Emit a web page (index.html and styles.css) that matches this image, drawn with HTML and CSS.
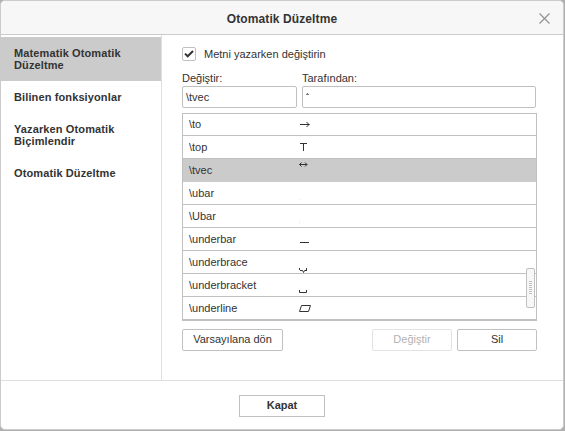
FILE: index.html
```html
<!DOCTYPE html>
<html lang="tr">
<head>
<meta charset="utf-8">
<title>Otomatik Düzeltme</title>
<link rel="stylesheet" href="styles.css">
</head>
<body>
<div class="dialog">
  <header class="header">
    <h1 class="title">Otomatik Düzeltme</h1>
    <svg class="close" width="11" height="11" viewBox="0 0 11 11"><path d="M.5.5l10 10M10.5.5l-10 10"/></svg>
  </header>
  <div class="body">
    <nav class="menu">
      <div class="menu-item active">Matematik Otomatik Düzeltme</div>
      <div class="menu-item">Bilinen fonksiyonlar</div>
      <div class="menu-item">Yazarken Otomatik Biçimlendir</div>
      <div class="menu-item">Otomatik Düzeltme</div>
    </nav>
    <main class="panel">
      <div class="check-row">
        <span class="checkbox"><svg width="12" height="12" viewBox="0 0 12 12"><path d="M2 5.600L4.700 8.300L10 3"/></svg></span>
        <span>Metni yazarken değiştirin</span>
      </div>
      <div class="fields">
        <div class="field replace"><span class="label">Değiştir:</span><div class="input">\tvec</div></div>
        <div class="field by"><span class="label">Tarafından:</span><div class="input"><svg width="4" height="22" viewBox="0 0 4 22"><path d="M0 8.500h3M1 7.500h1"/></svg></div></div>
      </div>
      <div class="list">
        <div class="row"><span class="name">\to</span><svg width="14" height="22" viewBox="0 0 14 22"><path d="M1 11.500h9.500M7.500 9l2.500 2.500L7.500 14"/></svg></div>
        <div class="row"><span class="name">\top</span><svg width="14" height="22" viewBox="0 0 14 22"><path d="M1 7.500h7M4.500 7.500V15"/></svg></div>
        <div class="row selected"><span class="name">\tvec</span><svg width="14" height="22" viewBox="0 0 14 22"><path d="M.5 5.500h7.500M2.500 3.500l-2 2 2 2M6 3.500l2 2-2 2"/></svg></div>
        <div class="row"><span class="name">\ubar</span><svg width="14" height="22" viewBox="0 0 14 22"><path class="speck" d="M0 17.500h1"/></svg></div>
        <div class="row"><span class="name">\Ubar</span><svg width="14" height="22" viewBox="0 0 14 22"><path class="speck" d="M0 16.500h1M0 18.500h1"/></svg></div>
        <div class="row"><span class="name">\underbar</span><svg width="14" height="22" viewBox="0 0 14 22"><path d="M1 14.500h9"/></svg></div>
        <div class="row"><span class="name">\underbrace</span><svg width="14" height="22" viewBox="0 0 14 22"><path d="M.5 17v2M1 19.500h2.500l1 2 1-2H8M7.500 19v-2"/></svg></div>
        <div class="row"><span class="name">\underbracket</span><svg width="14" height="22" viewBox="0 0 14 22"><path d="M.5 16v2.500h7V16"/></svg></div>
        <div class="row"><span class="name">\underline</span><svg width="14" height="22" viewBox="0 0 14 22"><path d="M2.500 8.500h9l-2 6h-9z"/></svg></div>
        <div class="thumb"><span class="grip"></span></div>
      </div>
      <div class="actions">
        <button class="btn reset">Varsayılana dön</button>
        <button class="btn change" disabled>Değiştir</button>
        <button class="btn remove">Sil</button>
      </div>
    </main>
  </div>
  <footer class="footer"><button class="btn primary">Kapat</button></footer>
</div>
</body>
</html>
```
FILE: styles.css
```css
* { box-sizing: border-box; }
body {
  margin: 0;
  width: 565px;
  height: 431px;
  overflow: hidden;
  background: #b0b0b0;
  font: 11px/12px "Liberation Sans", Arial, sans-serif;
  color: #333;
}
.dialog {
  display: flex;
  flex-direction: column;
  width: 564px;
  height: 430px;
  border: 1px solid #cbcbcb;
  border-radius: 5px;
  background: #fff;
  overflow: hidden;
}
.header {
  position: relative;
  height: 34px;
  background: #f7f7f7;
  border-bottom: 1px solid #cbcbcb;
}
.title {
  margin: 0;
  font-size: 12px;
  line-height: 36px;
  letter-spacing: .1px;
  text-align: center;
}
.close {
  position: absolute;
  top: 12px;
  right: 13px;
  stroke: #929292;
  stroke-width: 1.2;
}
.body { display: flex; height: 345px; }
.menu {
  width: 161px;
  padding-top: 2px;
  border-right: 1px solid #dfdfdf;
}
.menu-item {
  padding: 10px 30px 10px 13px;
  font-weight: bold;
  letter-spacing: .12px;
}
.menu-item.active { background: #cbcbcb; }
.panel { width: 375px; padding: 12px 0 0 20px; }
.check-row { display: flex; align-items: center; gap: 8px; height: 14px; }
.checkbox {
  width: 14px;
  height: 14px;
  border: 1px solid #c0c0c0;
  border-radius: 2px;
}
.checkbox svg { display: block; fill: none; stroke: #333; stroke-width: 2; }
.fields { display: flex; gap: 5px; margin-top: 11px; }
.label { display: block; height: 14px; }
.replace { width: 115px; }
.by { width: 234px; }
.input {
  height: 22px;
  padding-left: 3px;
  border: 1px solid #c0c0c0;
  border-radius: 2px;
  line-height: 21px;
}
.input svg { display: block; margin-top: -1px; stroke: #777; }
.list {
  position: relative;
  height: 208px;
  margin-top: 5px;
  border: 1px solid #c0c0c0;
}
.row {
  display: flex;
  height: 23px;
  padding-left: 6px;
  border-bottom: 1px solid #c0c0c0;
  line-height: 23px;
}
.row:first-child { height: 22px; line-height: 21px; }
.row:first-child svg { margin-top: -1px; }
.row.selected { background: #cbcbcb; border-color: #cbcbcb; }
.name { width: 110px; }
.row svg { fill: none; stroke: #333; }
.row .speck { stroke: #d5f5f8; }
.thumb {
  position: absolute;
  top: 154px;
  right: 1px;
  display: flex;
  align-items: center;
  justify-content: center;
  width: 9px;
  height: 40px;
  border: 1px solid #c0c0c0;
  border-radius: 2px;
  background: #f7f7f7;
}
.grip {
  width: 3px;
  height: 14px;
  background: repeating-linear-gradient(#c0c0c0 0 1px, transparent 1px 2px);
}
.actions { display: flex; margin-top: 8px; }
.btn {
  height: 22px;
  padding: 0 0 2px;
  border: 1px solid #c0c0c0;
  border-radius: 2px;
  background: #fff;
  color: #333;
  font: 11px/18px "Liberation Sans", Arial, sans-serif;
}
.reset { width: 101px; }
.change { width: 80px; margin-left: auto; margin-right: 5px; }
.change:disabled { border-color: #e3e3e3; color: #b2b2b2; }
.remove { width: 80px; }
.footer {
  display: flex;
  justify-content: center;
  height: 49px;
  padding-top: 14px;
  border-top: 1px solid #dfdfdf;
}
.primary { width: 86px; border-radius: 0; font-weight: bold; }
```
